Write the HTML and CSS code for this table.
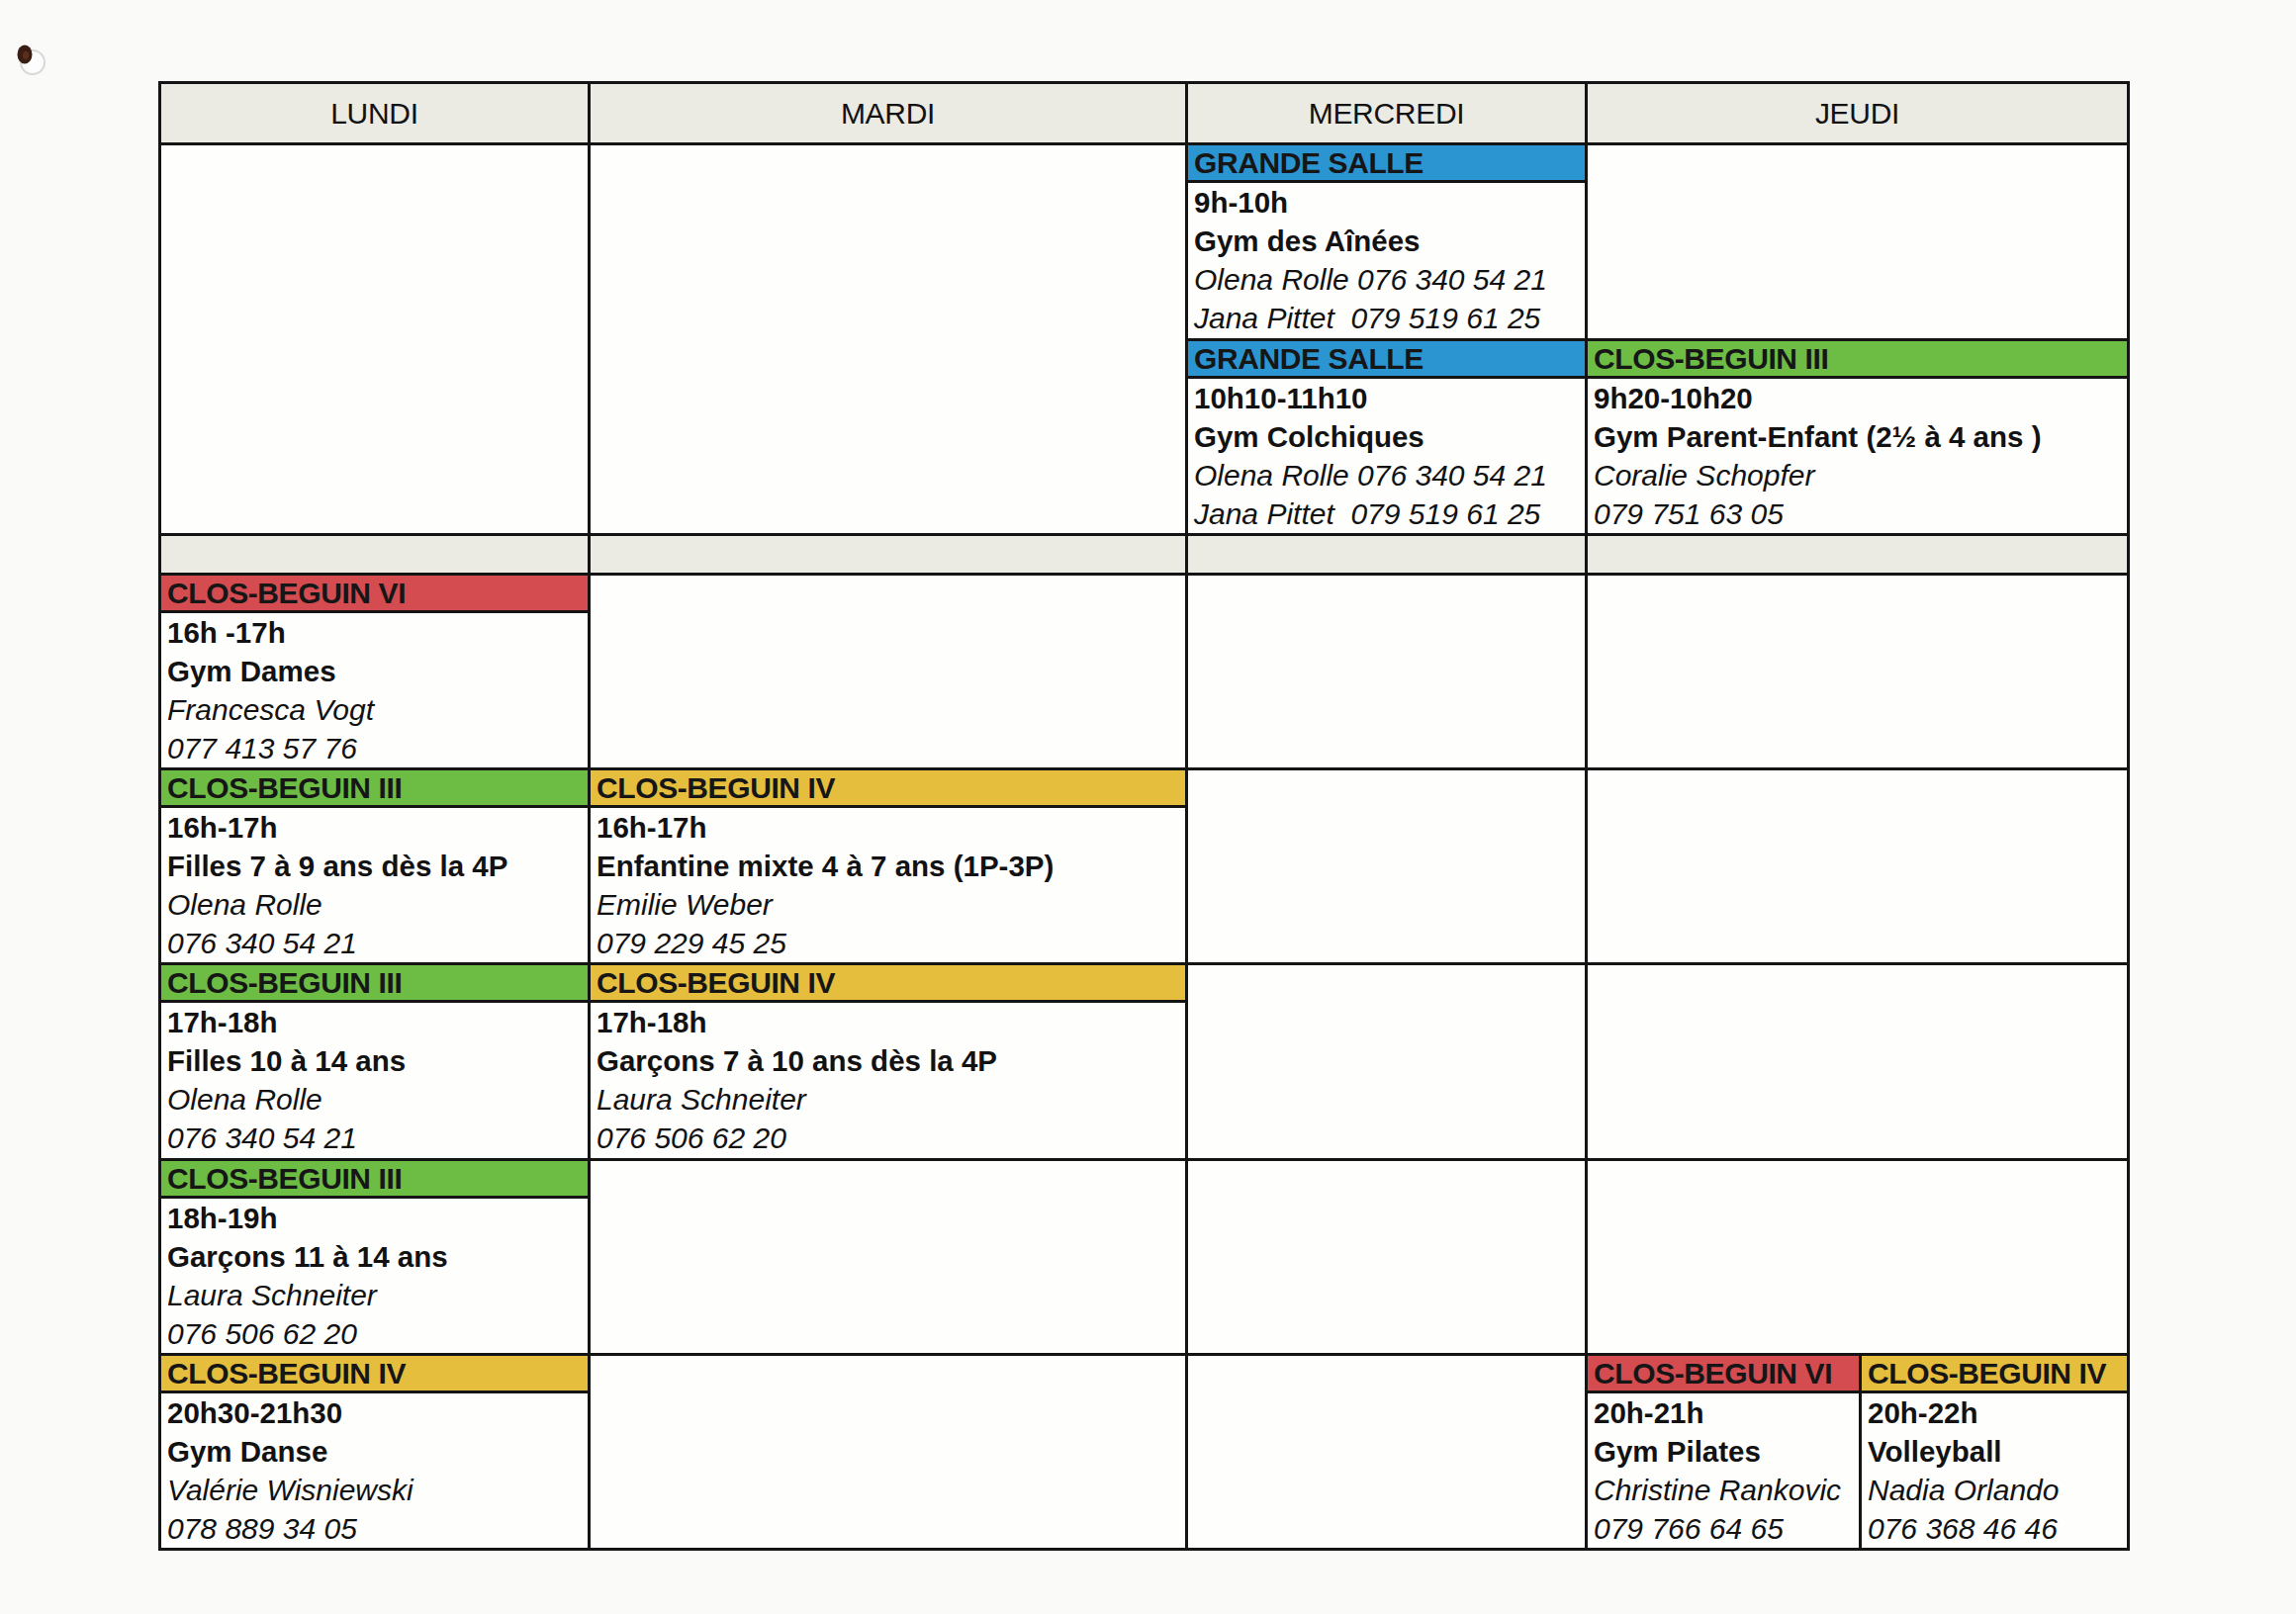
FILE: index.html
```html
<!DOCTYPE html>
<html lang="fr">
<head>
<meta charset="utf-8">
<title>Horaire</title>
<link rel="stylesheet" href="styles.css">
</head>
<body>
<div class="page">
  <div class="speck">
    <svg width="34" height="36" viewBox="0 0 34 36">
      <circle cx="19" cy="21" r="12" fill="#fdfdfd" stroke="#d9d8d5" stroke-width="2"/>
      <ellipse cx="11" cy="13" rx="7.5" ry="9.5" fill="#3a1e14"/>
      <ellipse cx="12" cy="14" rx="3" ry="4" fill="#5e2e1c"/>
    </svg>
  </div>
  <div class="schedule">
    <div class="head">LUNDI</div>
    <div class="head">MARDI</div>
    <div class="head">MERCREDI</div>
    <div class="head">JEUDI</div>

    <div class="cell span2"></div>
    <div class="cell span2"></div>
    <div class="cell block">
      <div class="tag blue">GRANDE SALLE</div>
      <div class="line b">9h-10h</div>
      <div class="line b">Gym des Aînées</div>
      <div class="line i">Olena Rolle 076 340 54 21</div>
      <div class="line i">Jana Pittet&nbsp; 079 519 61 25</div>
    </div>
    <div class="cell"></div>
    <div class="cell block">
      <div class="tag blue">GRANDE SALLE</div>
      <div class="line b">10h10-11h10</div>
      <div class="line b">Gym Colchiques</div>
      <div class="line i">Olena Rolle 076 340 54 21</div>
      <div class="line i">Jana Pittet&nbsp; 079 519 61 25</div>
    </div>
    <div class="cell block">
      <div class="tag green">CLOS-BEGUIN III</div>
      <div class="line b">9h20-10h20</div>
      <div class="line b">Gym Parent-Enfant (2½ à 4 ans )</div>
      <div class="line i">Coralie Schopfer</div>
      <div class="line i">079 751 63 05</div>
    </div>

    <div class="band"></div>
    <div class="band"></div>
    <div class="band"></div>
    <div class="band"></div>

    <div class="cell block">
      <div class="tag red">CLOS-BEGUIN VI</div>
      <div class="line b">16h -17h</div>
      <div class="line b">Gym Dames</div>
      <div class="line i">Francesca Vogt</div>
      <div class="line i">077 413 57 76</div>
    </div>
    <div class="cell"></div>
    <div class="cell"></div>
    <div class="cell"></div>

    <div class="cell block">
      <div class="tag green">CLOS-BEGUIN III</div>
      <div class="line b">16h-17h</div>
      <div class="line b">Filles 7 à 9 ans dès la 4P</div>
      <div class="line i">Olena Rolle</div>
      <div class="line i">076 340 54 21</div>
    </div>
    <div class="cell block">
      <div class="tag yellow">CLOS-BEGUIN IV</div>
      <div class="line b">16h-17h</div>
      <div class="line b">Enfantine mixte 4 à 7 ans (1P-3P)</div>
      <div class="line i">Emilie Weber</div>
      <div class="line i">079 229 45 25</div>
    </div>
    <div class="cell"></div>
    <div class="cell"></div>

    <div class="cell block">
      <div class="tag green">CLOS-BEGUIN III</div>
      <div class="line b">17h-18h</div>
      <div class="line b">Filles 10 à 14 ans</div>
      <div class="line i">Olena Rolle</div>
      <div class="line i">076 340 54 21</div>
    </div>
    <div class="cell block">
      <div class="tag yellow">CLOS-BEGUIN IV</div>
      <div class="line b">17h-18h</div>
      <div class="line b">Garçons 7 à 10 ans dès la 4P</div>
      <div class="line i">Laura Schneiter</div>
      <div class="line i">076 506 62 20</div>
    </div>
    <div class="cell"></div>
    <div class="cell"></div>

    <div class="cell block">
      <div class="tag green">CLOS-BEGUIN III</div>
      <div class="line b">18h-19h</div>
      <div class="line b">Garçons 11 à 14 ans</div>
      <div class="line i">Laura Schneiter</div>
      <div class="line i">076 506 62 20</div>
    </div>
    <div class="cell"></div>
    <div class="cell"></div>
    <div class="cell"></div>

    <div class="cell block">
      <div class="tag yellow">CLOS-BEGUIN IV</div>
      <div class="line b">20h30-21h30</div>
      <div class="line b">Gym Danse</div>
      <div class="line i">Valérie Wisniewski</div>
      <div class="line i">078 889 34 05</div>
    </div>
    <div class="cell"></div>
    <div class="cell"></div>
    <div class="split">
      <div class="cell block">
        <div class="tag red">CLOS-BEGUIN VI</div>
        <div class="line b">20h-21h</div>
        <div class="line b">Gym Pilates</div>
        <div class="line i">Christine Rankovic</div>
        <div class="line i">079 766 64 65</div>
      </div>
      <div class="cell block">
        <div class="tag yellow">CLOS-BEGUIN IV</div>
        <div class="line b">20h-22h</div>
        <div class="line b">Volleyball</div>
        <div class="line i">Nadia Orlando</div>
        <div class="line i">076 368 46 46</div>
      </div>
    </div>
  </div>
</div>
</body>
</html>
```

FILE: styles.css
```css
html, body {
  margin: 0;
  padding: 0;
  background: #fafaf9;
}

body {
  font-family: "Liberation Sans", Arial, sans-serif;
  color: #121212;
}

.page {
  width: 2321px;
  height: 1632px;
  padding-top: 42px;
  box-sizing: border-box;
}

.speck {
  width: 34px;
  height: 36px;
  margin-left: 14px;
  line-height: 0;
}

.schedule {
  margin-top: 4px;
  margin-left: 160px;
  display: grid;
  grid-template-columns: 431px 601px 401px 545px;
  grid-template-rows: 59px 195px 194px 37px 194px 194px 195px 194px 194px;
  gap: 3px;
  padding: 3px;
  background: #141414;
  width: fit-content;
}

.head {
  background: #ebeae3;
  font-size: 30px;
  display: flex;
  align-items: center;
  justify-content: center;
  letter-spacing: -0.3px;
}

.band {
  background: #ebeae3;
}

.cell {
  background: #fefefd;
  min-width: 0;
}

.span2 {
  grid-row: span 2;
}

.block {
  display: flex;
  flex-direction: column;
}

.tag {
  height: 35px;
  line-height: 36px;
  border-bottom: 3px solid #141414;
  padding-left: 6px;
  font-weight: bold;
  font-size: 30px;
  letter-spacing: -0.4px;
  white-space: nowrap;
  color: #161616;
}

.blue { background: #2b95d2; }
.green { background: #6dbd45; }
.yellow { background: #e6be3e; }
.red { background: #d44b50; }

.line {
  height: 39px;
  line-height: 39px;
  padding-left: 6px;
  font-size: 30px;
  white-space: nowrap;
}

.b {
  font-weight: bold;
  font-size: 29.5px;
}

.i {
  font-style: italic;
}

.split {
  display: grid;
  grid-template-columns: 274px 268px;
  gap: 3px;
  background: #141414;
}
```
